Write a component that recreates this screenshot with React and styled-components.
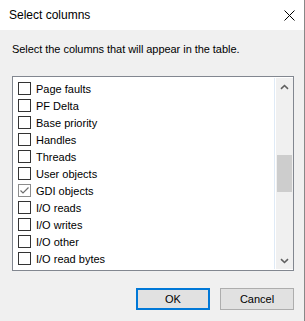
import React from "react";
import styled, { createGlobalStyle } from "styled-components";

const Global = createGlobalStyle`
  html, body { margin: 0; padding: 0; background: #f0f0f0; }
  body { font-family: "Liberation Sans", Arial, sans-serif; }
  * { box-sizing: border-box; }
`;

const Dialog = styled.div`
  width: 305px;
  height: 321px;
  display: flex;
  flex-direction: column;
  background: #f0f0f0;
  border-right: 1px solid #888888;
  color: #000;
`;

const TitleBar = styled.div`
  height: 30px;
  flex: none;
  display: flex;
  align-items: center;
  background: #ffffff;
  padding-left: 9px;
`;

const Title = styled.div`
  flex: 1;
  font-size: 12px;
  line-height: 30px;
`;

const CloseButton = styled.div`
  width: 30px;
  height: 30px;
  display: flex;
  align-items: center;
  justify-content: center;
`;

const Body = styled.div`
  flex: 1;
  display: flex;
  flex-direction: column;
  padding: 12px 10px 0 12px;
`;

const Description = styled.div`
  font-size: 11px;
  line-height: 15px;
  letter-spacing: -0.05px;
  margin-bottom: 19px;
`;

const ListBox = styled.div`
  height: 195px;
  border: 1px solid #828790;
  background: #ffffff;
  display: flex;
  padding: 1px 0 1px 0;
`;

const ListItems = styled.div`
  flex: 1;
  overflow: hidden;
  padding-top: 2px;
  border-right: 1px solid #dfeaf6;
  margin-right: 1px;
`;

const Row = styled.div`
  height: 17px;
  display: flex;
  align-items: center;
  padding-left: 5px;
  font-size: 11px;
  gap: 5px;
`;

const Box = styled.div`
  width: 13px;
  height: 13px;
  flex: none;
  border: 1px solid ${(p) => (p.$checked ? "#8c8c8c" : "#333333")};
  background: #ffffff;
  display: flex;
  align-items: center;
  justify-content: center;
`;

const ScrollBar = styled.div`
  width: 17px;
  flex: none;
  background: #f0f0f0;
  display: flex;
  flex-direction: column;
`;

const ArrowButton = styled.div`
  height: 17px;
  flex: none;
  display: flex;
  align-items: center;
  justify-content: center;
`;

const Track = styled.div`
  flex: 1;
  display: flex;
  flex-direction: column;
  align-items: center;
`;

const Thumb = styled.div`
  width: 15px;
  height: 37px;
  background: #cdcdcd;
`;

const ButtonRow = styled.div`
  display: flex;
  justify-content: flex-end;
  gap: 10px;
  margin-top: 17px;
`;

const Button = styled.div`
  width: 74px;
  height: 22px;
  background: #e1e1e1;
  border: ${(p) => (p.$default ? "2px solid #0078d7" : "1px solid #adadad")};
  display: flex;
  align-items: center;
  justify-content: center;
  font-size: 11px;
`;

const items = [
  { name: "Page faults" },
  { name: "PF Delta" },
  { name: "Base priority" },
  { name: "Handles" },
  { name: "Threads" },
  { name: "User objects" },
  { name: "GDI objects", checked: true },
  { name: "I/O reads" },
  { name: "I/O writes" },
  { name: "I/O other" },
  { name: "I/O read bytes" },
  { name: "I/O write bytes" },
];

const Check = () => (
  <svg width="11" height="11" viewBox="0 0 11 11">
    <path d="M1.5 5.5 L4 8 L9.5 2.5" fill="none" stroke="#6e6e6e" strokeWidth="1.2" />
  </svg>
);

const Chevron = ({ down }) => (
  <svg width="9" height="6" viewBox="0 0 9 6">
    <path
      d={down ? "M1 1.2 L4.5 4.5 L8 1.2" : "M1 4.8 L4.5 1.5 L8 4.8"}
      fill="none"
      stroke="#606060"
      strokeWidth="1.6"
    />
  </svg>
);

export default function App() {
  const thumbOffset = 60;
  return (
    <>
      <Global />
      <Dialog>
        <TitleBar>
          <Title>Select columns</Title>
          <CloseButton>
            <svg width="11" height="11" viewBox="0 0 11 11">
              <path d="M0.5 0.5 L10.5 10.5 M10.5 0.5 L0.5 10.5" stroke="#000" strokeWidth="1" />
            </svg>
          </CloseButton>
        </TitleBar>
        <Body>
          <Description>Select the columns that will appear in the table.</Description>
          <ListBox>
            <ListItems>
              {items.map((it) => (
                <Row key={it.name}>
                  <Box $checked={it.checked}>{it.checked && <Check />}</Box>
                  <span>{it.name}</span>
                </Row>
              ))}
            </ListItems>
            <ScrollBar>
              <ArrowButton>
                <Chevron />
              </ArrowButton>
              <Track>
                <Thumb style={{ marginTop: thumbOffset }} />
              </Track>
              <ArrowButton>
                <Chevron down />
              </ArrowButton>
            </ScrollBar>
          </ListBox>
          <ButtonRow>
            <Button $default>OK</Button>
            <Button>Cancel</Button>
          </ButtonRow>
        </Body>
      </Dialog>
    </>
  );
}
